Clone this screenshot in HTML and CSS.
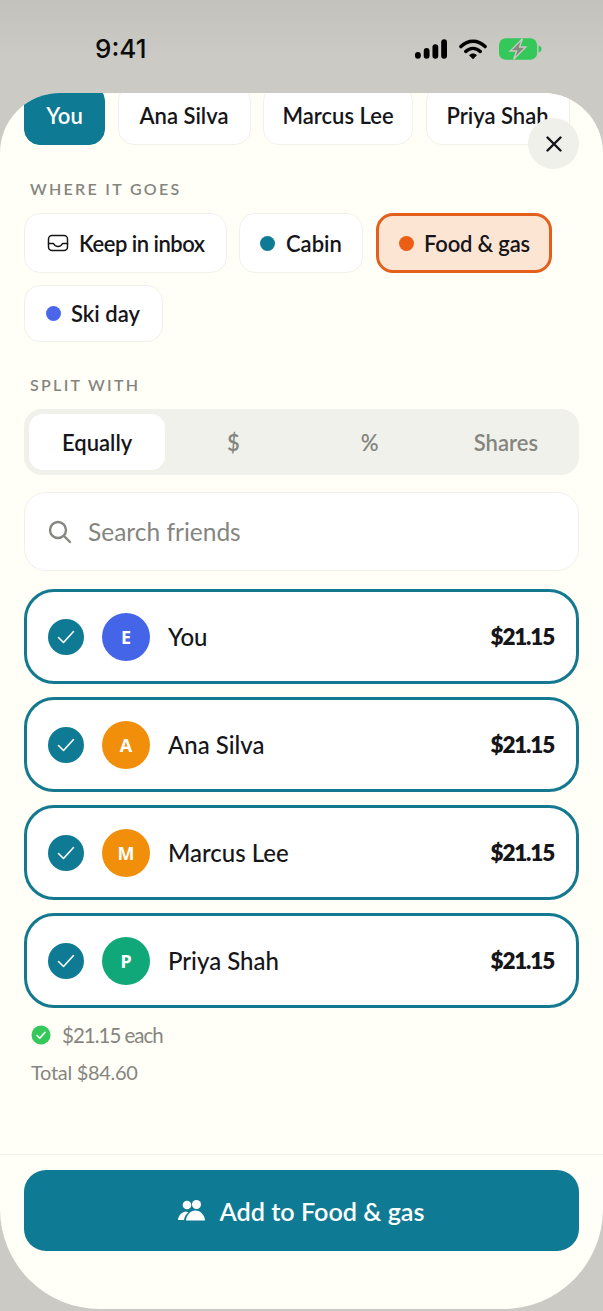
FILE: index.html
```html
<!DOCTYPE html>
<html lang="en">
<head>
    <meta charset="UTF-8">
    <title>Add to Food &amp; gas</title>
    <link rel="stylesheet" href="styles.css">
</head>
<body>
    <div class="phone">
        <div class="status-bar">
            <span class="time">9:41</span>
            <div class="status-icons">
                <svg width="32" height="20" viewBox="0 0 33 20"><rect x="0" y="13" width="6" height="7" rx="3"/><rect x="9" y="9" width="6" height="11" rx="3"/><rect x="18" y="5" width="6" height="15" rx="3"/><rect x="27" y="0" width="6" height="20" rx="3"/></svg>
                <svg width="28" height="22" viewBox="0 0 29 22"><path d="M2 8.500C9.500 1.200 19.500 1.200 27 8.500M7 13.500C11.500 9.300 17.500 9.300 22 13.500" fill="none" stroke="#000" stroke-width="3.600" stroke-linecap="round"/><path d="M10.400 17.400C12.800 15.200 16.200 15.200 18.600 17.400L14.500 21.600Z"/></svg>
                <svg width="43" height="22" viewBox="0 0 44 22"><rect x="0" y="0" width="39" height="22" rx="7" fill="#34c759"/><path d="M40.500 7.500c2 .5 3 1.800 3 3.500s-1 3-3 3.500z" fill="#34c759"/><path d="M24 0.500 11.500 13h6.500l-3 8.500L27.500 9H21z" fill="#85887f" stroke="#cbcac4" stroke-width="1.400"/></svg>
            </div>
        </div>
        <div class="sheet">
            <button class="close-btn">
                <svg width="16" height="16" viewBox="0 0 16 16"><path d="M1.500 1.500 14.500 14.500M14.500 1.500 1.500 14.500" stroke="#16161a" stroke-width="2.400" stroke-linecap="round"/></svg>
            </button>
            <div class="sheet-body">
                <div class="payer-row">
                    <div class="chip payer active">You</div>
                    <div class="chip payer">Ana Silva</div>
                    <div class="chip payer">Marcus Lee</div>
                    <div class="chip payer">Priya Shah</div>
                </div>

                <div class="label where-label">WHERE IT GOES</div>
                <div class="dest-row">
                    <div class="chip dest inbox">
                        <svg class="inbox-icon" width="22" height="18" viewBox="0 0 22 18" fill="none" stroke="#16161a" stroke-width="1.500" stroke-linejoin="round" stroke-linecap="round"><rect x="1.500" y="1.500" width="19" height="15" rx="3.500"/><path d="M1.500 9.500h5c1 2.200 2.500 3 4.500 3s3.500-.8 4.500-3h5"/></svg>
                        Keep in inbox
                    </div>
                    <div class="chip dest cabin"><span class="dot teal"></span>Cabin</div>
                    <div class="chip dest food selected"><span class="dot orange"></span>Food &amp; gas</div>
                    <div class="chip dest ski"><span class="dot blue"></span>Ski day</div>
                </div>

                <div class="label split-label">SPLIT WITH</div>
                <div class="segmented">
                    <div class="seg on">Equally</div>
                    <div class="seg">$</div>
                    <div class="seg">%</div>
                    <div class="seg">Shares</div>
                </div>

                <div class="search">
                    <svg width="24" height="24" viewBox="0 0 24 24" fill="none" stroke="#85857f" stroke-width="2.400" stroke-linecap="round"><circle cx="10" cy="10" r="8"/><path d="M16 16l6 6"/></svg>
                    <span>Search friends</span>
                </div>

                <div class="people">
                    <div class="person">
                        <span class="check"><svg width="18" height="14" viewBox="0 0 18 14" fill="none" stroke="#fff" stroke-width="1.600" stroke-linecap="round" stroke-linejoin="round"><path d="M1.500 7.500 6.500 12.500 16.500 1.500"/></svg></span>
                        <span class="avatar blue">E</span>
                        <span class="name">You</span>
                        <span class="amount">$21.15</span>
                    </div>
                    <div class="person">
                        <span class="check"><svg width="18" height="14" viewBox="0 0 18 14" fill="none" stroke="#fff" stroke-width="1.600" stroke-linecap="round" stroke-linejoin="round"><path d="M1.500 7.500 6.500 12.500 16.500 1.500"/></svg></span>
                        <span class="avatar amber">A</span>
                        <span class="name">Ana Silva</span>
                        <span class="amount">$21.15</span>
                    </div>
                    <div class="person">
                        <span class="check"><svg width="18" height="14" viewBox="0 0 18 14" fill="none" stroke="#fff" stroke-width="1.600" stroke-linecap="round" stroke-linejoin="round"><path d="M1.500 7.500 6.500 12.500 16.500 1.500"/></svg></span>
                        <span class="avatar amber">M</span>
                        <span class="name">Marcus Lee</span>
                        <span class="amount">$21.15</span>
                    </div>
                    <div class="person">
                        <span class="check"><svg width="18" height="14" viewBox="0 0 18 14" fill="none" stroke="#fff" stroke-width="1.600" stroke-linecap="round" stroke-linejoin="round"><path d="M1.500 7.500 6.500 12.500 16.500 1.500"/></svg></span>
                        <span class="avatar green">P</span>
                        <span class="name">Priya Shah</span>
                        <span class="amount">$21.15</span>
                    </div>
                </div>

                <div class="each">
                    <svg width="20" height="20" viewBox="0 0 20 20"><circle cx="10" cy="10" r="9.500" fill="#34c759"/><path d="M6 10.500 8.800 13.200 14 7.300" fill="none" stroke="#fff" stroke-width="1.600" stroke-linecap="round" stroke-linejoin="round"/></svg>
                    <span>$21.15 each</span>
                </div>
                <div class="total">Total $84.60</div>
            </div>
            <div class="sheet-footer">
                <button class="add-btn">
                    <svg width="27" height="21" viewBox="0 0 27 21" fill="#fff"><circle cx="9" cy="5" r="4.300"/><circle cx="18.500" cy="4.500" r="4.500"/><path d="M0 20c.3-4 3-7.500 7.500-8.500l3 1c-2.500 1.500-4 4-4.500 7.500z"/><path d="M8 20.500c0-5 4.500-10 9.500-10s9.500 5 9.500 10z"/></svg>
                    Add to Food &amp; gas
                </button>
            </div>
        </div>
    </div>
</body>
</html>
```

FILE: styles.css
```css
* {
    box-sizing: border-box;
}
body {
    margin: 0;
    font-family: Lato, "Noto Sans", sans-serif;
    color: #16161a;
    background: #cbcac4;
}
button {
    font-family: inherit;
    border: none;
}
.phone {
    width: 603px;
    height: 1311px;
    display: flex;
    flex-direction: column;
    overflow: hidden;
    background: linear-gradient(#c3c2bc 0, #cbcac4 60px);
}

/* status bar */
.status-bar {
    height: 93px;
    flex: none;
    display: flex;
    justify-content: space-between;
    align-items: flex-start;
    padding: 33px 61px 0 95px;
}
.time {
    font-family: Inter, sans-serif;
    font-size: 26px;
    font-weight: 500;
    line-height: 31px;
    color: #0c0c0c;
}
.status-icons {
    display: flex;
    align-items: center;
    gap: 12px;
    padding-top: 5px;
}

/* sheet */
.sheet {
    position: relative;
    height: 1216px;
    flex: none;
    display: flex;
    flex-direction: column;
    background: #fffff8;
    border-radius: 60px 60px 100px 100px;
    overflow: hidden;
}
.close-btn {
    position: absolute;
    top: 25px;
    right: 24px;
    width: 51px;
    height: 51px;
    border-radius: 50%;
    background: #f0f0eb;
    display: flex;
    align-items: center;
    justify-content: center;
    padding: 0;
}
.sheet-body {
    flex: 1;
    padding: 0 24px;
}
.chip {
    display: flex;
    align-items: center;
    background: #fff;
    border: 1px solid #f1f1ec;
    border-radius: 16px;
    font-size: 22px;
    font-weight: 600;
    white-space: nowrap;
}
.payer-row {
    display: flex;
    gap: 12.500px;
    margin-top: -8px;
}
.payer {
    height: 60px;
    justify-content: center;
}
.payer:nth-child(1) { width: 81px; }
.payer:nth-child(2) { width: 133px; }
.payer:nth-child(3) { width: 150px; }
.payer:nth-child(4) { width: 144px; }
.payer.active {
    background: #0e7a93;
    border-color: #0e7a93;
    color: #fff;
}
.label {
    font-size: 16px;
    font-weight: 600;
    letter-spacing: 2.300px;
    line-height: 20px;
    color: #85857f;
    padding-left: 6px;
}
.where-label {
    margin-top: 34px;
}
.dest-row {
    display: flex;
    flex-wrap: wrap;
    gap: 12px;
    margin-top: 14px;
}
.dest {
    height: 60px;
    gap: 10px;
    padding: 0 20px;
}
.inbox { width: 203px; padding-left: 22px; gap: 10px; letter-spacing: -0.500px; }
.inbox-icon { flex: none; }
.cabin { width: 124px; gap: 11px; }
.food { width: 176px; margin-left: 1px; letter-spacing: -0.200px; }
.ski { width: 139px; height: 57px; padding-left: 21px; }
.selected {
    background: #fde5d4;
    border: 3px solid #e2601c;
    border-radius: 17px;
}
.dot {
    width: 15px;
    height: 15px;
    flex: none;
    border-radius: 50%;
}
.dot.teal { background: #0e7a93; }
.dot.orange { background: #ea5f14; }
.dot.blue { background: #4a67ea; }
.split-label {
    margin-top: 33px;
}
.segmented {
    display: grid;
    grid-template-columns: repeat(4, 1fr);
    height: 66px;
    margin-top: 14px;
    padding: 5px;
    background: #f1f1ec;
    border-radius: 18px;
}
.seg {
    display: flex;
    align-items: center;
    justify-content: center;
    font-size: 22px;
    font-weight: 600;
    color: #85857f;
    border-radius: 14px;
}
.seg.on {
    background: #fff;
    color: #16161a;
}
.search {
    display: flex;
    align-items: center;
    gap: 16px;
    height: 79px;
    margin-top: 17px;
    padding: 0 23px;
    background: #fff;
    border: 1px solid #f1f1ec;
    border-radius: 22px;
    font-size: 24.500px;
    color: #85857f;
}
.people {
    display: flex;
    flex-direction: column;
    gap: 13px;
    margin-top: 18px;
}
.person {
    display: flex;
    align-items: center;
    height: 95px;
    padding: 0 22px 0 21px;
    background: #fff;
    border: 3px solid #14788f;
    border-radius: 30px;
}
.check {
    width: 36px;
    height: 36px;
    flex: none;
    border-radius: 50%;
    background: #0e7a93;
    display: flex;
    align-items: center;
    justify-content: center;
}
.avatar {
    width: 48px;
    height: 48px;
    flex: none;
    margin: 0 18px;
    border-radius: 50%;
    color: #fff;
    font-family: "Noto Sans", sans-serif;
    font-size: 18px;
    font-weight: 700;
    display: flex;
    align-items: center;
    justify-content: center;
}
.avatar.blue { background: #4565e8; }
.avatar.amber { background: #f28f0a; }
.avatar.green { background: #10a878; }
.name {
    flex: 1;
    font-size: 24px;
    font-weight: 500;
}
.amount {
    font-size: 22.500px;
    font-weight: 800;
    letter-spacing: -1.200px;
}
.each {
    display: flex;
    align-items: center;
    gap: 11px;
    margin-top: 14px;
    padding-left: 7px;
    font-size: 20.500px;
    letter-spacing: -1px;
    line-height: 26px;
    color: #85857f;
}
.total {
    margin-top: 12px;
    padding-left: 7px;
    font-size: 20px;
    letter-spacing: -0.300px;
    line-height: 24px;
    color: #85857f;
}
.sheet-footer {
    flex: none;
    height: 155px;
    padding: 15px 24px 0;
    border-top: 1px solid #f1f1ec;
}
.add-btn {
    width: 100%;
    height: 81px;
    display: flex;
    align-items: center;
    justify-content: center;
    gap: 14px;
    background: #0e7a93;
    color: #fff;
    border-radius: 22px;
    font-size: 25.200px;
    font-weight: 600;
}
```
